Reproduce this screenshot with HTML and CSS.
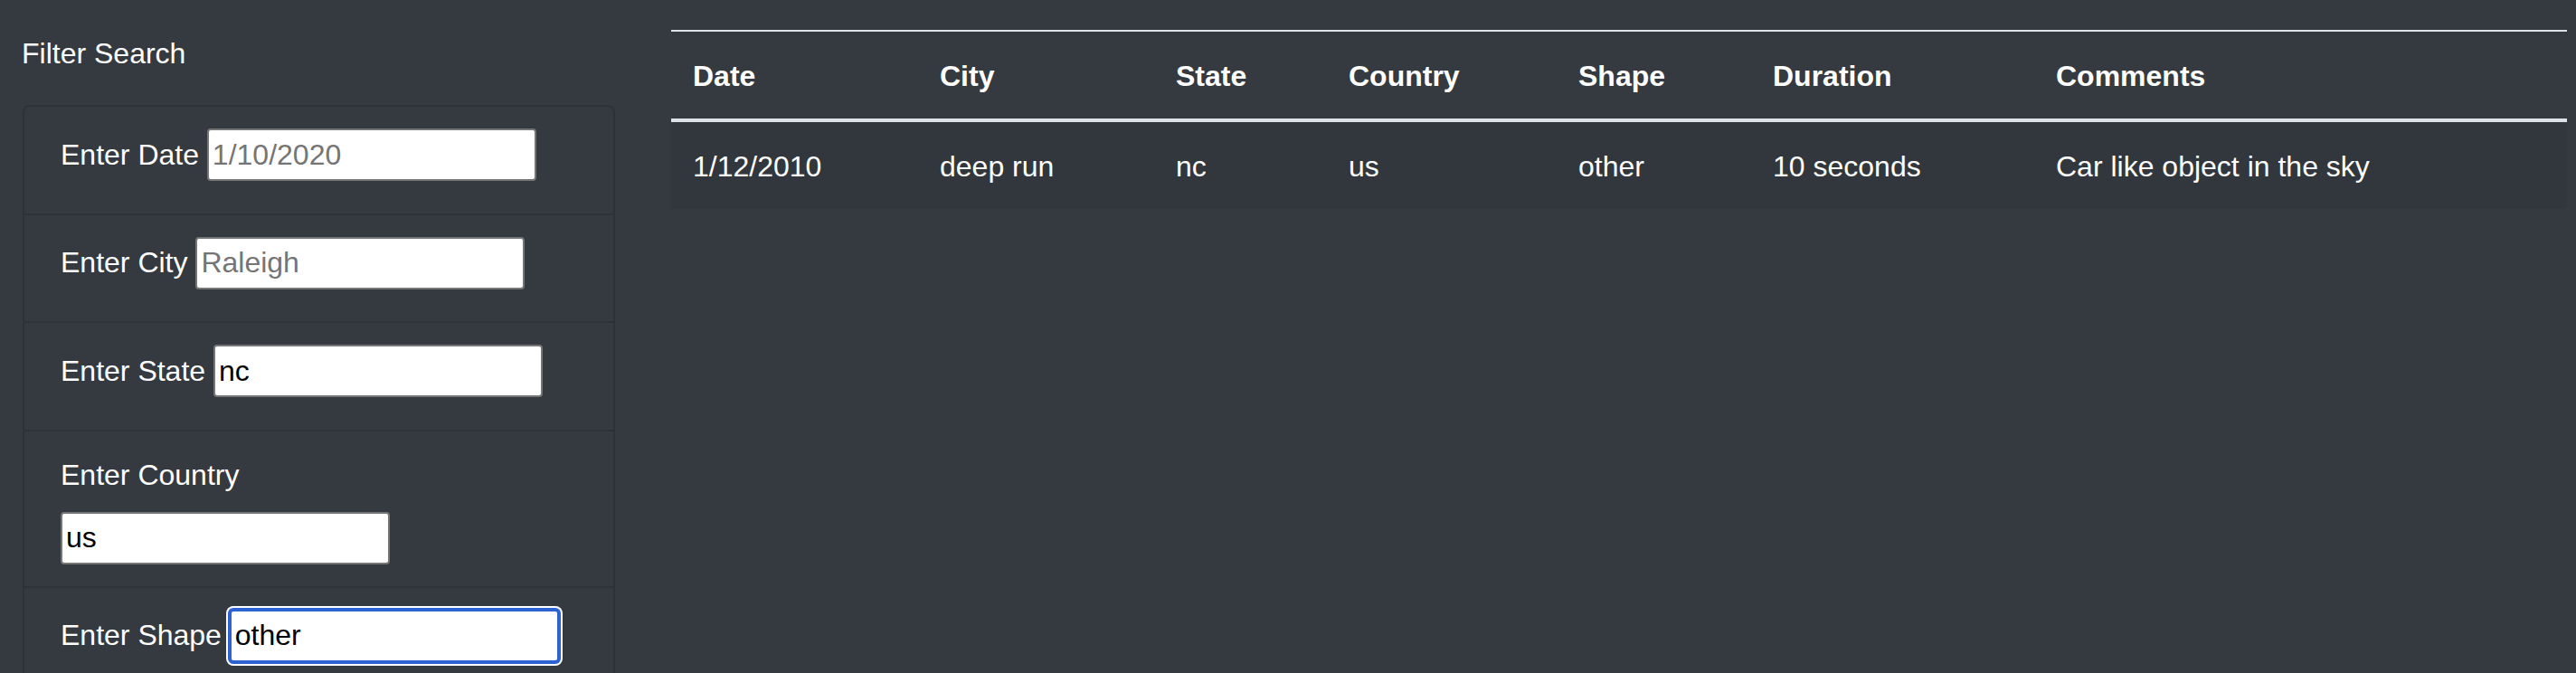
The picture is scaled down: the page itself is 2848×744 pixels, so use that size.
FILE: index.html
```html
<!DOCTYPE html>
<html lang="en">
<head>
<meta charset="utf-8">
<title>UFO Sightings</title>
<link rel="stylesheet" href="styles.css">
</head>
<body>
<div class="page">
  <aside class="sidebar">
    <h5 class="sidebar-title">Filter Search</h5>
    <ul class="filter-list">
      <li class="filter-item"><label class="filter-label" for="date">Enter Date</label> <input class="filter-input" id="date" type="text" placeholder="1/10/2020"></li>
      <li class="filter-item"><label class="filter-label" for="city">Enter City</label> <input class="filter-input" id="city" type="text" placeholder="Raleigh"></li>
      <li class="filter-item"><label class="filter-label" for="state">Enter State</label> <input class="filter-input" id="state" type="text" value="nc"></li>
      <li class="filter-item"><label class="filter-label" for="country">Enter Country</label> <input class="filter-input" id="country" type="text" value="us"></li>
      <li class="filter-item"><label class="filter-label" for="shape">Enter Shape</label> <input class="filter-input is-focused" id="shape" type="text" value="other"></li>
    </ul>
  </aside>
  <main class="results">
    <table class="ufo-table">
      <colgroup>
        <col class="col-date">
        <col class="col-city">
        <col class="col-state">
        <col class="col-country">
        <col class="col-shape">
        <col class="col-duration">
        <col class="col-comments">
      </colgroup>
      <thead>
        <tr>
          <th>Date</th>
          <th>City</th>
          <th>State</th>
          <th>Country</th>
          <th>Shape</th>
          <th>Duration</th>
          <th>Comments</th>
        </tr>
      </thead>
      <tbody>
        <tr>
          <td>1/12/2010</td>
          <td>deep run</td>
          <td>nc</td>
          <td>us</td>
          <td>other</td>
          <td>10 seconds</td>
          <td>Car like object in the sky</td>
        </tr>
      </tbody>
    </table>
  </main>
</div>
</body>
</html>
```

FILE: styles.css
```css
* {
  box-sizing: border-box;
}

html, body {
  margin: 0;
  background: #343a40;
  color: #ffffff;
  font-family: "Liberation Sans", Arial, sans-serif;
  font-size: 32px;
  line-height: 48px;
  height: 100%;
  overflow: hidden;
}

.page {
  display: flex;
  align-items: flex-start;
  padding: 0 10px 0 24px;
}

.sidebar {
  width: 656px;
  flex: none;
}

.sidebar-title {
  margin: 35px 0 33px;
  font-size: 32px;
  font-weight: 400;
  line-height: 48px;
}

.filter-list {
  list-style: none;
  margin: 0 0 0 1px;
  padding: 0;
  border: 2px solid rgba(0, 0, 0, 0.125);
  border-bottom: 0;
  border-radius: 8px 8px 0 0;
  min-height: 700px;
}

.filter-item {
  padding: 24px 50px 24px 40px;
  border-top: 2px solid rgba(0, 0, 0, 0.125);
  line-height: 48px;
}

.filter-item:first-child {
  border-top: 0;
}

.filter-label {
  display: inline-block;
  margin-bottom: 17px;
}

.filter-input {
  display: inline-block;
  width: 364px;
  height: 58px;
  padding: 0 4px;
  border: 2px solid #767676;
  border-radius: 4px;
  background: #ffffff;
  color: #000000;
  font-family: "Liberation Sans", Arial, sans-serif;
  font-size: 32px;
  line-height: 48px;
  vertical-align: baseline;
}

.filter-input::placeholder {
  color: #757575;
}

.filter-input.is-focused {
  outline: none;
  border: 2px solid #2c62d2;
  box-shadow: 0 0 0 2px #2c62d2, 0 0 0 4px #ffffff;
}

.results {
  flex: 1;
  margin-left: 62px;
  padding-top: 33px;
}

.ufo-table {
  width: 100%;
  border-collapse: collapse;
  table-layout: fixed;
}

.col-date { width: 273px; }
.col-city { width: 261px; }
.col-state { width: 191px; }
.col-country { width: 254px; }
.col-shape { width: 215px; }
.col-duration { width: 313px; }

.ufo-table th,
.ufo-table td {
  padding: 25px 24px 23px;
  text-align: left;
  vertical-align: top;
  line-height: 48px;
  border-top: 2px solid #dee2e6;
}

.ufo-table th {
  font-weight: 700;
  vertical-align: bottom;
  border-bottom: 4px solid #dee2e6;
}

.ufo-table tbody tr {
  background: rgba(0, 0, 0, 0.05);
}
```
